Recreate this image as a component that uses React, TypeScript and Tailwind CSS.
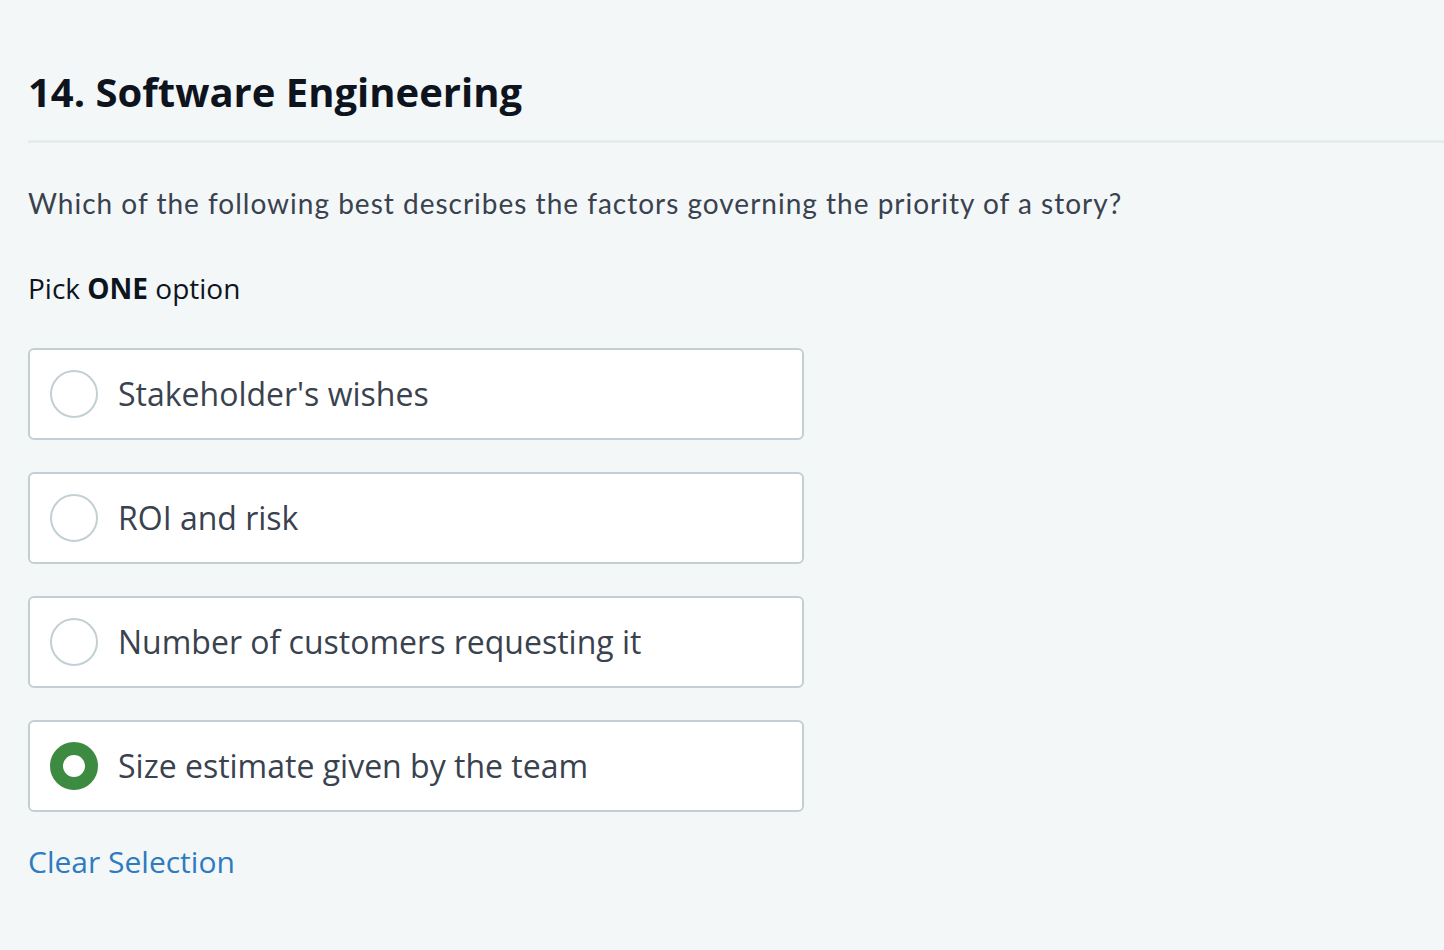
import React from "react";

const options = [
  "Stakeholder's wishes",
  "ROI and risk",
  "Number of customers requesting it",
  "Size estimate given by the team",
];

export default function App() {
  const selected = 3;
  return (
    <div className="min-h-[950px] w-full bg-[#f3f7f8] pl-[28px] pt-[66px]" style={{ fontFamily: "'Open Sans', sans-serif" }}>
      <h1 className="text-[40px] font-bold leading-[52px] text-[#0e141e]">14. Software Engineering</h1>
      <div className="mt-[22px] h-[3px] bg-[#e6ebed]" />
      <p className="mt-[40px] text-[28px] leading-[40px] tracking-[1px] text-[#39424e]" style={{ fontFamily: "Lato, sans-serif" }}>
        Which of the following best describes the factors governing the priority of a story?
      </p>
      <p className="mt-[46px] text-[28px] leading-[38px] text-[#0e141e]">
        Pick <b className="font-bold">ONE</b> option
      </p>
      <div className="mt-[41px] flex w-[776px] flex-col gap-[32px]">
        {options.map((o, i) => (
          <div key={o} className="flex h-[92px] items-center rounded-[6px] border-2 border-[#c2d0d4] bg-white pl-[20px]">
            {i === selected ? (
              <div className="h-[48px] w-[48px] rounded-full border-[13px] border-[#3d8b40] bg-white" />
            ) : (
              <div className="h-[48px] w-[48px] rounded-full border-2 border-[#c2d0d4] bg-white" />
            )}
            <span className="ml-[20px] text-[32px] text-[#39424e]">{o}</span>
          </div>
        ))}
      </div>
      <div className="mt-[28px] text-[30px] leading-[44px] text-[#2f7bbf]">Clear Selection</div>
    </div>
  );
}
